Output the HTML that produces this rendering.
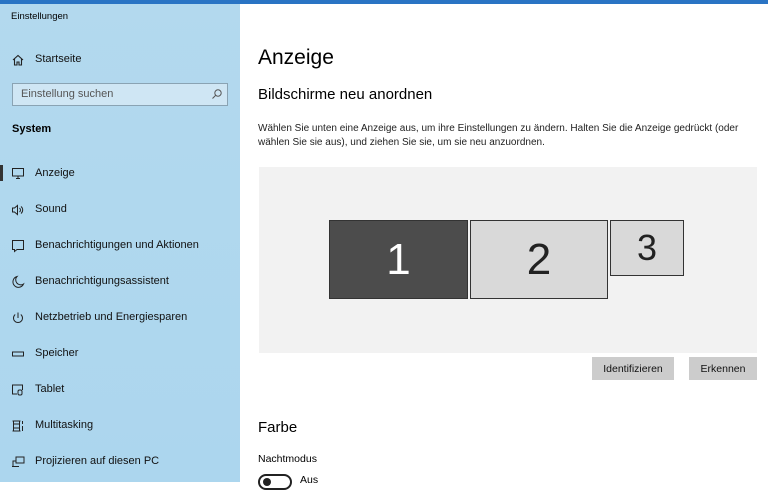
<!DOCTYPE html>
<html><head><meta charset="utf-8"><style>
*{margin:0;padding:0;box-sizing:border-box}
body{width:768px;height:482px;overflow:hidden;font-family:"Liberation Sans",sans-serif;color:#000;position:relative;background:#fff}
.side{position:absolute;left:0;top:0;width:240px;height:482px;background:linear-gradient(180deg,#b3d9ee,#acd6ee)}
.topbar{position:absolute;left:0;top:0;width:768px;height:4px;background:#2a74c4}
.t{position:absolute;white-space:nowrap}
.nav{position:absolute;left:35px;font-size:11px;color:#111}
.ic{position:absolute;left:11px;width:14px;height:14px}
.main{position:absolute;left:240px;top:4px;width:528px;height:478px;background:#fff}
.mon{position:absolute;border:1px solid #333;display:flex;align-items:center;justify-content:center;font-weight:300;font-size:44px}
.btn{position:absolute;background:#ccc;font-size:10.5px;display:flex;align-items:center;justify-content:center;color:#111}
</style></head><body>
<div class="side">
<div class="t" style="left:11px;top:11px;font-size:9.5px">Einstellungen</div>
<svg class="ic" style="top:53px" viewBox="0 0 14 14" fill="none" stroke="#222" stroke-width="1.1"><path d="M2 7L7 2.5 12 7M3.5 5.8V12H6V9h2v3h2.5V5.8"/></svg>
<div class="nav" style="top:53px">Startseite</div>
<div style="position:absolute;left:12px;top:83px;width:216px;height:23px;border:1px solid #8aa3b3;background:#cfe6f4"></div>
<div class="t" style="left:21px;top:88px;font-size:11px;color:#555">Einstellung suchen</div>
<svg style="position:absolute;left:211px;top:88px" width="12" height="12" viewBox="0 0 12 12" fill="none" stroke="#555"><circle cx="7" cy="5" r="3.2"/><path d="M4.6 7.4L1.5 10.5"/></svg>
<div class="t" style="left:12px;top:123px;font-size:11px;font-weight:bold">System</div>
<div style="position:absolute;left:0;top:165px;width:3px;height:16px;background:#333"></div>
<svg class="ic" style="top:166px" viewBox="0 0 14 14" fill="none" stroke="#222"><rect x="1.5" y="2.5" width="11" height="7.5"/><path d="M5 12.5h4M7 10v2.5"/></svg>
<div class="nav" style="top:167px">Anzeige</div>
<svg class="ic" style="top:203px" viewBox="0 0 14 14" fill="none" stroke="#222"><path d="M1.5 5h2l3-2.5v9L3.5 9h-2zM8.5 5a2.5 2.5 0 010 4M10 3.5a4.5 4.5 0 010 7"/></svg>
<div class="nav" style="top:203px">Sound</div>
<svg class="ic" style="top:239px" viewBox="0 0 14 14" fill="none" stroke="#222"><path d="M1.5 1.5h11v9H6l-2.5 2v-2h-2z"/></svg>
<div class="nav" style="top:239px">Benachrichtigungen und Aktionen</div>
<svg class="ic" style="top:275px" viewBox="0 0 14 14" fill="none" stroke="#222"><path d="M6 1.5A5.5 5.5 0 1012.5 9 5 5 0 016 1.5z"/></svg>
<div class="nav" style="top:275px">Benachrichtigungsassistent</div>
<svg class="ic" style="top:311px" viewBox="0 0 14 14" fill="none" stroke="#222"><path d="M7 1.5V7M4.2 3.5a4.5 4.5 0 105.6 0"/></svg>
<div class="nav" style="top:311px">Netzbetrieb und Energiesparen</div>
<svg class="ic" style="top:347px" viewBox="0 0 14 14" fill="none" stroke="#222"><rect x="1.5" y="5" width="11" height="4"/></svg>
<div class="nav" style="top:347px">Speicher</div>
<svg class="ic" style="top:383px" viewBox="0 0 14 14" fill="none" stroke="#222"><path d="M6 11H1.5V2h10v5"/><rect x="7" y="7" width="4" height="5" rx="1.5"/></svg>
<div class="nav" style="top:383px">Tablet</div>
<svg class="ic" style="top:419px" viewBox="0 0 14 14" fill="none" stroke="#222"><path d="M1.5 2h8M1.5 12h8M2.5 2v10M8.5 2v10M2.5 5h6M2.5 9h6M11.5 2v3M11.5 7v5"/></svg>
<div class="nav" style="top:419px">Multitasking</div>
<svg class="ic" style="top:455px" viewBox="0 0 14 14" fill="none" stroke="#222"><rect x="5" y="2" width="8" height="6"/><path d="M1 11.5h7M2 11.5V6h3"/></svg>
<div class="nav" style="top:455px">Projizieren auf diesen PC</div>
</div>
<div class="main"></div>
<div class="topbar"></div>
<div class="t" style="left:258px;top:46px;font-size:21px;font-weight:300">Anzeige</div>
<div class="t" style="left:258px;top:86px;font-size:15px">Bildschirme neu anordnen</div>
<div class="t" style="left:258px;top:122px;font-size:10px;line-height:14px;color:#222">Wählen Sie unten eine Anzeige aus, um ihre Einstellungen zu ändern. Halten Sie die Anzeige gedrückt (oder<br>wählen Sie sie aus), und ziehen Sie sie, um sie neu anzuordnen.</div>
<div style="position:absolute;left:259px;top:167px;width:498px;height:186px;background:#f2f2f2"></div>
<div class="mon" style="left:329px;top:220px;width:139px;height:79px;background:#4c4c4c;color:#fff">1</div>
<div class="mon" style="left:470px;top:220px;width:138px;height:79px;background:#d9d9d9;color:#222">2</div>
<div class="mon" style="left:610px;top:220px;width:74px;height:56px;background:#d9d9d9;color:#222;font-size:36px">3</div>
<div class="btn" style="left:592px;top:357px;width:82px;height:23px">Identifizieren</div>
<div class="btn" style="left:689px;top:357px;width:68px;height:23px">Erkennen</div>
<div class="t" style="left:258px;top:419px;font-size:15px">Farbe</div>
<div class="t" style="left:258px;top:453px;font-size:10.5px">Nachtmodus</div>
<div style="position:absolute;left:258px;top:474px;width:34px;height:16px;border:2px solid #222;border-radius:8px"></div>
<div style="position:absolute;left:263px;top:478px;width:8px;height:8px;border-radius:50%;background:#222"></div>
<div class="t" style="left:300px;top:474px;font-size:10.5px">Aus</div>
</body></html>
